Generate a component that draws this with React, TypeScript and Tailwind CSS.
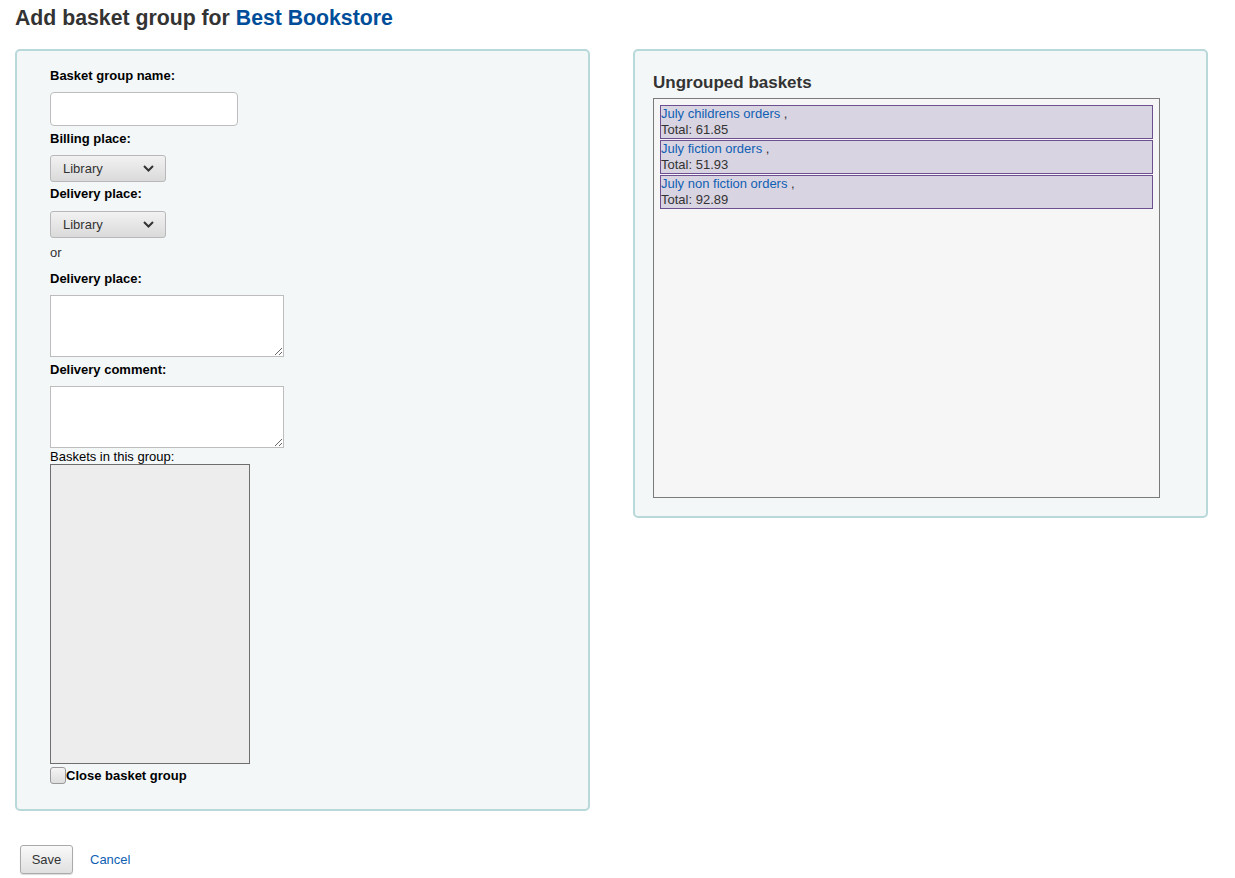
import React from "react";

const baskets = [
  { name: "July childrens orders", total: "61.85" },
  { name: "July fiction orders", total: "51.93" },
  { name: "July non fiction orders", total: "92.89" },
];

function Select({ second }: { second?: boolean }) {
  return (
    <div className={(second ? "mt-[9px] " : "mt-[8px] ") + "flex h-[27px] w-[116px] items-center justify-between rounded-[3px] border border-[#b8b8b8] bg-gradient-to-b from-[#f2f2f2] to-[#dadada] pl-[12px] pr-[11px] text-[13px] text-[#333]"}>
      <span>Library</span>
      <svg width="11" height="7" viewBox="0 0 11 7" className="text-[#333]">
        <path d="M1 1l4.5 4.5L10 1" fill="none" stroke="currentColor" strokeWidth="2" />
      </svg>
    </div>
  );
}

export default function App() {
  return (
    <div className="min-h-[878px] bg-white text-[13px] text-[#000]" style={{ fontFamily: '"Liberation Sans", Arial, sans-serif' }}>
      <div className="px-[15px] pt-[4px]">
        <h1 className="h-[28px] text-[21.25px] font-bold leading-[28px] text-[#333]">
          Add basket group for <a className="text-[#004d99]">Best Bookstore</a>
        </h1>
        <div className="mt-[17px] flex items-start gap-[43px]">
          <div className="h-[762px] w-[575px] rounded-[5px] border-2 border-[#b9d8da] bg-[#f3f7f8] pl-[33px] pt-[17px]">
            <div className="font-bold leading-[16px]">Basket group name:</div>
            <div className="mt-[8px] h-[34px] w-[188px] rounded-[4px] border border-[#bdbdbd] bg-white" />
            <div className="mt-[5px] font-bold leading-[16px]">Billing place:</div>
            <Select />
            <div className="mt-[4px] font-bold leading-[16px]">Delivery place:</div>
            <Select second />
            <div className="mt-[7px] leading-[16px] text-[#333]">or</div>
            <div className="mt-[10px] font-bold leading-[16px]">Delivery place:</div>
            <textarea className="mt-[8px] block h-[62px] w-[234px] border border-[#bdbdbd] bg-white" />
            <div className="mt-[5px] font-bold leading-[16px]">Delivery comment:</div>
            <textarea className="mt-[8px] block h-[62px] w-[234px] border border-[#bdbdbd] bg-white" />
            <div className="mt-[1px] leading-[15px]">Baskets in this group:</div>
            <div className="h-[300px] w-[200px] border border-[#6e6e6e] bg-[#ededed]" />
            <div className="mt-[3px] flex items-center">
              <span className="inline-block h-[17px] w-[16px] rounded-[3px] border border-[#999] bg-gradient-to-b from-[#f4f4f4] to-[#dedede]" />
              <span className="font-bold leading-[16px]">Close basket group</span>
            </div>
          </div>
          <div className="h-[469px] w-[575px] rounded-[5px] border-2 border-[#b9d8da] bg-[#f3f7f8] pl-[18px] pt-[22px]">
            <h2 className="text-[17px] font-bold leading-[20px] text-[#333]">Ungrouped baskets</h2>
            <div className="mt-[5px] h-[400px] w-[507px] border border-[#7a7a7a] bg-[#f6f6f6] px-[6px] pt-[6px]">
              {baskets.map((b) => (
                <div key={b.name} className="mb-[1px] border border-[#6e4f92] bg-[#d9d4e2] leading-[16px] text-[#333]">
                  <div>
                    <a className="text-[#0f5fb3]">{b.name}</a> ,
                  </div>
                  <div>Total: {b.total}</div>
                </div>
              ))}
            </div>
          </div>
        </div>
        <div className="mt-[34px] flex items-center">
          <button className="ml-[5px] h-[29px] w-[53px] rounded-[3px] border border-[#aaa] bg-gradient-to-b from-[#f9f9f9] to-[#e0e0e0] text-[13px] text-[#333] shadow-[0_1px_1px_rgba(0,0,0,0.15)]">
            Save
          </button>
          <a className="ml-[17px] text-[13px] text-[#0f5fb3]">Cancel</a>
        </div>
      </div>
    </div>
  );
}
